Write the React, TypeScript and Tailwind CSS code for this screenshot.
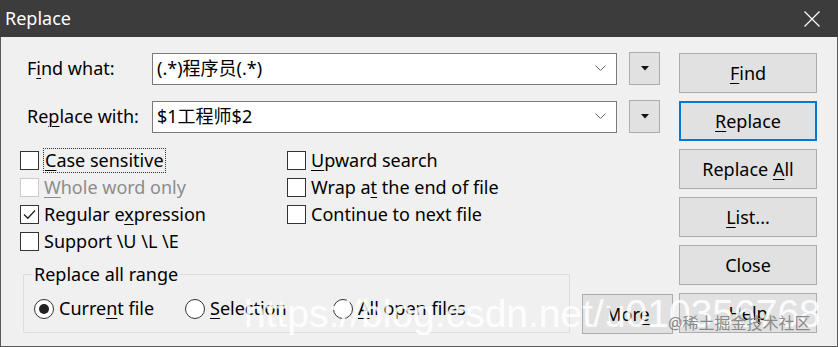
import React from "react";

const font = { fontFamily: '"Noto Sans", "Noto Sans CJK SC", sans-serif' };

const U = ({ children }: { children: React.ReactNode }) => (
  <span className="underline underline-offset-[3px] decoration-1">{children}</span>
);

const Checkbox = ({ checked, disabled }: { checked?: boolean; disabled?: boolean }) => (
  <span
    className={`flex h-[19px] w-[19px] shrink-0 items-center justify-center border bg-white ${
      disabled ? "border-[#cccccc]" : "border-[#333333]"
    }`}
  >
    {checked && (
      <svg width="13" height="11" viewBox="0 0 13 11">
        <path d="M1 5.5 L4.8 9.3 L12 1.5" fill="none" stroke="#222" strokeWidth="1.3" />
      </svg>
    )}
  </span>
);

const Radio = ({ checked }: { checked?: boolean }) => (
  <span className="flex h-[20px] w-[20px] shrink-0 items-center justify-center rounded-full border border-[#333333] bg-white">
    {checked && <span className="h-[10px] w-[10px] rounded-full bg-[#222]" />}
  </span>
);

const Combo = ({ value }: { value: string }) => (
  <div className="flex h-[32px] w-[465px] items-center justify-between border border-[#7a7a7a] bg-white pl-[4px] pr-[10px]">
    <span className="text-[18px] text-black">{value}</span>
    <svg width="11" height="7" viewBox="0 0 11 7">
      <path d="M0.5 0.5 L5.5 5.5 L10.5 0.5" fill="none" stroke="#666" strokeWidth="1" />
    </svg>
  </div>
);

const SmallDrop = () => (
  <div className="ml-[12px] flex h-[33px] w-[31px] items-center justify-center border border-[#adadad] bg-[#e1e1e1]">
    <svg width="8" height="5" viewBox="0 0 8 5">
      <path d="M0 0 L8 0 L4 4.5 Z" fill="#111" />
    </svg>
  </div>
);

const Btn = ({
  children,
  focused,
  className = "",
}: {
  children: React.ReactNode;
  focused?: boolean;
  className?: string;
}) => (
  <div
    className={`flex h-[40px] items-center justify-center bg-[#e1e1e1] text-[18px] text-black ${
      focused ? "border-2 border-[#0078d7]" : "border border-[#adadad]"
    } ${className}`}
  >
    <span className="whitespace-pre">{children}</span>
  </div>
);

export default function App() {
  return (
    <div className="relative h-[347px] w-[838px] overflow-hidden bg-[#f0f0f0]" style={font}>
      <div className="flex h-[37px] items-center justify-between bg-[#3c3c3c] pl-[5px] pr-[18px]">
        <span className="text-[18px] text-white">Replace</span>
        <svg width="16" height="16" viewBox="0 0 16 16">
          <path d="M0.5 0.5 L15.5 15.5 M15.5 0.5 L0.5 15.5" stroke="#fff" strokeWidth="1.2" />
        </svg>
      </div>

      <div className="flex h-[310px] border-x border-b border-[#595959] text-[18px] text-black">
        <div className="flex w-[678px] flex-col">
          <div className="mt-[15px] flex items-center">
            <span className="w-[151px] whitespace-nowrap pl-[26px]">
              F<U>i</U>nd what:
            </span>
            <Combo value="(.*)程序员(.*)" />
            <SmallDrop />
          </div>
          <div className="mt-[15px] flex items-center">
            <span className="w-[151px] whitespace-nowrap pl-[26px]">
              Re<U>p</U>lace with:
            </span>
            <Combo value="$1工程师$2" />
            <SmallDrop />
          </div>

          <div className="mt-[18px] flex pl-[19px]">
            <div className="flex w-[267px] flex-col gap-[8px]">
              <div className="flex h-[19px] items-center gap-[4px]">
                <Checkbox />
                <span className="whitespace-nowrap border border-dotted border-[#333] px-[1px] leading-[23px]">
                  <U>C</U>ase sensitive
                </span>
              </div>
              <div className="flex h-[19px] items-center gap-[5px] text-[#8c8c8c]">
                <Checkbox disabled />
                <span className="whitespace-nowrap">
                  <U>W</U>hole word only
                </span>
              </div>
              <div className="flex h-[19px] items-center gap-[5px]">
                <Checkbox checked />
                <span className="whitespace-nowrap">
                  Regular e<U>x</U>pression
                </span>
              </div>
              <div className="flex h-[19px] items-center gap-[5px]">
                <Checkbox />
                <span className="whitespace-nowrap">Support \U \L \E</span>
              </div>
            </div>
            <div className="flex flex-col gap-[8px]">
              <div className="flex h-[19px] items-center gap-[5px]">
                <Checkbox />
                <span className="whitespace-nowrap">
                  <U>U</U>pward search
                </span>
              </div>
              <div className="flex h-[19px] items-center gap-[5px]">
                <Checkbox />
                <span className="whitespace-nowrap">
                  Wrap a<U>t</U> the end of file
                </span>
              </div>
              <div className="flex h-[19px] items-center gap-[5px]">
                <Checkbox />
                <span className="whitespace-nowrap">Continue to next file</span>
              </div>
            </div>
          </div>

          <div className="mt-[23px] flex items-end pl-[22px]">
            <div className="relative h-[59px] w-[547px] rounded-[2px] border border-[#dcdcdc]">
              <span className="absolute left-[8px] top-[-13px] whitespace-nowrap bg-[#f0f0f0] px-[2px] leading-[24px]">
                Replace all range
              </span>
              <div className="mt-[20px] flex items-center pl-[10px]">
                <div className="flex w-[151px] items-center gap-[5px]">
                  <Radio checked />
                  <span className="whitespace-nowrap">
                    Curre<U>n</U>t file
                  </span>
                </div>
                <div className="flex w-[148px] items-center gap-[5px]">
                  <Radio />
                  <span className="whitespace-nowrap">
                    <U>S</U>election
                  </span>
                </div>
                <div className="flex items-center gap-[5px]">
                  <Radio />
                  <span className="whitespace-nowrap">
                    <U>A</U>ll open files
                  </span>
                </div>
              </div>
            </div>
            <Btn className="mb-[-1px] ml-[12px] w-[91px]">
              Mor<U>e</U>
            </Btn>
          </div>
        </div>

        <div className="flex w-[138px] flex-col gap-[8px] pt-[16px]">
          <Btn>
            <U>F</U>ind
          </Btn>
          <Btn focused>
            <U>R</U>eplace
          </Btn>
          <Btn>
            Replace <U>A</U>ll
          </Btn>
          <Btn>
            <U>L</U>ist...
          </Btn>
          <Btn>Close</Btn>
          <Btn>Help</Btn>
        </div>
      </div>

      <span
        className="pointer-events-none absolute left-[244px] top-[294px] whitespace-nowrap text-[39px] leading-none text-white/85"
        style={{ fontFamily: '"Liberation Sans", sans-serif' }}
      >
        https://blog.csdn.net/u010356768
      </span>
      <span className="pointer-events-none absolute left-[668px] top-[315px] whitespace-nowrap text-[16px] leading-none text-[#8a8a8a]">
        @稀土掘金技术社区
      </span>
    </div>
  );
}
